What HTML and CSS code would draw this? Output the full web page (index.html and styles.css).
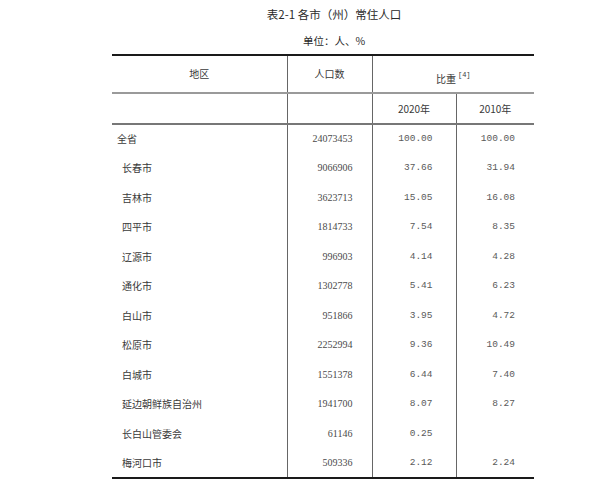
FILE: index.html
```html
<!DOCTYPE html>
<html lang="zh">
<head>
<meta charset="utf-8">
<title>表2-1 各市（州）常住人口</title>
<link rel="stylesheet" href="styles.css">
</head>
<body>
<div class="page">
  <div class="caption">
    <div class="title">表2-1 各市（州）常住人口</div>
    <div class="unit">单位：人、%</div>
  </div>
  <table class="data">
    <colgroup>
      <col class="c1"><col class="c2"><col class="c3"><col class="c4">
    </colgroup>
    <thead>
      <tr class="h1">
        <th>地区</th>
        <th>人口数</th>
        <th colspan="2" class="share">比重<sup>[4]</sup></th>
      </tr>
      <tr class="h2">
        <th></th>
        <th></th>
        <th>2020年</th>
        <th>2010年</th>
      </tr>
    </thead>
    <tbody>
      <tr><td class="name top">全省</td><td class="pop">24073453</td><td class="pct">100.00</td><td class="pct">100.00</td></tr>
      <tr><td class="name">长春市</td><td class="pop">9066906</td><td class="pct">37.66</td><td class="pct">31.94</td></tr>
      <tr><td class="name">吉林市</td><td class="pop">3623713</td><td class="pct">15.05</td><td class="pct">16.08</td></tr>
      <tr><td class="name">四平市</td><td class="pop">1814733</td><td class="pct">7.54</td><td class="pct">8.35</td></tr>
      <tr><td class="name">辽源市</td><td class="pop">996903</td><td class="pct">4.14</td><td class="pct">4.28</td></tr>
      <tr><td class="name">通化市</td><td class="pop">1302778</td><td class="pct">5.41</td><td class="pct">6.23</td></tr>
      <tr><td class="name">白山市</td><td class="pop">951866</td><td class="pct">3.95</td><td class="pct">4.72</td></tr>
      <tr><td class="name">松原市</td><td class="pop">2252994</td><td class="pct">9.36</td><td class="pct">10.49</td></tr>
      <tr><td class="name">白城市</td><td class="pop">1551378</td><td class="pct">6.44</td><td class="pct">7.40</td></tr>
      <tr><td class="name">延边朝鲜族自治州</td><td class="pop">1941700</td><td class="pct">8.07</td><td class="pct">8.27</td></tr>
      <tr><td class="name">长白山管委会</td><td class="pop">61146</td><td class="pct">0.25</td><td class="pct"></td></tr>
      <tr><td class="name">梅河口市</td><td class="pop">509336</td><td class="pct">2.12</td><td class="pct">2.24</td></tr>
    </tbody>
  </table>
</div>
</body>
</html>
```
FILE: styles.css
```css
html, body {
  margin: 0;
  padding: 0;
  background: #ffffff;
}
body {
  font-family: "Noto Sans CJK SC", "Noto Sans", sans-serif;
  color: #3a3a3a;
}
.page {
  width: 600px;
  height: 488px;
  padding-left: 112px;
  box-sizing: border-box;
  overflow: hidden;
}
.caption {
  width: 444px;
  display: flex;
  flex-direction: column;
  align-items: center;
  padding-top: 5px;
}
.title {
  font-size: 11.5px;
  line-height: 18px;
  color: #2a2a2a;
}
.unit {
  font-size: 10.5px;
  line-height: 18px;
  margin-top: 9px;
  color: #2a2a2a;
}
.data {
  margin-top: 4px;
  width: 422px;
  border-collapse: collapse;
  table-layout: fixed;
  border-top: 2px solid #1a1a1a;
  border-bottom: 2px solid #1a1a1a;
}
.c1 { width: 175px; }
.c2 { width: 85px; }
.c3 { width: 84px; }
.c4 { width: 78px; }
.data th,
.data td {
  box-sizing: border-box;
}
.data th {
  font-weight: normal;
  font-size: 10px;
  line-height: 12px;
  color: #3a3a3a;
  padding: 0;
  text-align: center;
  vertical-align: middle;
}
.h1 th {
  height: 38px;
  border-bottom: 2px solid #9a9a9a;
}
.h2 th {
  height: 31px;
  border-bottom: 2px solid #777;
}
.data th + th,
.data td + td {
  border-left: 1.5px solid #666;
}
.h2 th:nth-child(4) {
  border-left: 1.5px solid #666;
}
.data th.share {
  padding-top: 10px;
}
.share sup {
  font-family: "Liberation Mono", monospace;
  font-size: 7px;
  line-height: 0;
  vertical-align: 6px;
  margin-left: 2px;
}
.data td {
  height: 29.5px;
  padding: 0;
  font-size: 10px;
  line-height: 12px;
  vertical-align: middle;
}
.data td.name {
  padding-left: 10px;
}
.data td.name.top {
  padding-left: 5px;
}
.data td.pop {
  text-align: right;
  padding-right: 19px;
  font-family: "Liberation Serif", serif;
  font-size: 10px;
  color: #4a4a4a;
}
.data td.pct {
  text-align: right;
  padding-right: 23px;
  font-family: "Liberation Mono", monospace;
  font-size: 9.5px;
  color: #5a5a5a;
}
.data td.pct:nth-child(4) {
  padding-right: 19px;
}
```
